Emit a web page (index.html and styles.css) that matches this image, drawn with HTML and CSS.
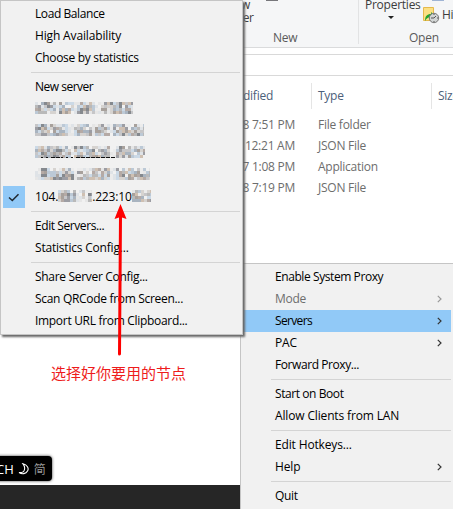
FILE: index.html
```
<!DOCTYPE html>
<html lang="en">
<head>
<meta charset="utf-8">
<title>Servers menu</title>
<link rel="stylesheet" href="styles.css">
</head>
<body>
<main class="desktop">
  <section class="explorer">
    <div class="ribbon">
      <div class="group group-new">
        <span class="cut">New<br>folder</span>
        <i class="stub stub-new"></i>
        <span class="caption">New</span>
      </div>
      <div class="group group-open">
        <div class="props">Properties<b class="caret"></b></div>
        <i class="stub stub-open"></i>
        <div class="history">
          <svg width="17" height="17" viewBox="0 0 17 17"><path d="M.5.5h10v13H.5z" fill="#fbe083" stroke="#e5b94c"/><path d="M2 14c0-5 2-7 6-7V5l4 4-4 3v-2c-3 0-4 1-6 4z" fill="#25a52d"/><circle cx="11" cy="11" r="4.700" fill="#d2d5d5" stroke="#777"/><path d="M11 11l2-2M11 11H8M11 7v1M11 14v1M14 11h1" stroke="#555" fill="none"/></svg>
          <span>History</span>
        </div>
        <span class="caption">Open</span>
      </div>
    </div>
    <div class="address"></div>
    <div class="table">
      <div class="row head"><span>Date modified</span><span>Type</span><span>Size</span></div>
      <div class="row"><span>8 7:51 PM</span><span>File folder</span></div>
      <div class="row"><span>8 12:21 AM</span><span>JSON File</span></div>
      <div class="row"><span>7 1:08 PM</span><span>Application</span></div>
      <div class="row"><span>8 7:19 PM</span><span>JSON File</span></div>
    </div>
  </section>
  <div class="taskbar"></div>
  <div class="ime"><span>CH</span><svg width="12" height="12" viewBox="0 0 12 12"><path d="M5 .8C9 2 11.300 5 9.500 8 8 11 4 11.500 1 9.500 4 10 6 9 6.500 6.500 7 4 6 2 5 .8z" fill="none" stroke="#fff" stroke-width="1.100"/></svg><span class="mode">简</span></div>

  <nav class="menu tray">
    <div class="item t4">Enable System Proxy</div>
    <div class="item off t3">Mode<svg class="chev" viewBox="0 0 5 8"><path d="M.8.8 4 4 .8 7.200"/></svg></div>
    <div class="item active t6">Servers<svg class="chev" viewBox="0 0 5 8"><path d="M.8.8 4 4 .8 7.200"/></svg></div>
    <div class="item">PAC<svg class="chev" viewBox="0 0 5 8"><path d="M.8.8 4 4 .8 7.200"/></svg></div>
    <div class="item t4">Forward Proxy...</div>
    <hr>
    <div class="item t4">Start on Boot</div>
    <div class="item">Allow Clients from LAN</div>
    <hr>
    <div class="item">Edit Hotkeys...</div>
    <div class="item">Help<svg class="chev" viewBox="0 0 5 8"><path d="M.8.8 4 4 .8 7.200"/></svg></div>
    <hr>
    <div class="item t3">Quit</div>
  </nav>

  <nav class="menu servers">
    <div class="item t4">Load Balance</div>
    <div class="item">High Availability</div>
    <div class="item t3">Choose by statistics</div>
    <hr>
    <div class="item t5">New server</div>
    <div class="item"><svg class="mosaic" data-width="98" data-gaps="19,38,60"></svg></div>
    <div class="item"><svg class="mosaic" data-width="109" data-gaps="33,55,73"></svg></div>
    <div class="item"><svg class="mosaic" data-width="110" data-gaps="35,75" data-feet="1"></svg></div>
    <div class="item"><svg class="mosaic" data-width="115" data-gaps="0,37,75"></svg></div>
    <div class="item checked"><span class="check"><svg width="12" height="9" viewBox="0 0 12 9"><path d="M1 4.500 4.300 7.500 10.500 1.200" fill="none" stroke="#202830" stroke-width="1.500"/></svg></span>104.<svg class="mosaic gap" data-width="34" data-gaps="18,26"></svg>.223:10<svg class="mosaic" data-width="19" data-gaps=""></svg></div>
    <hr>
    <div class="item t4">Edit Servers...</div>
    <div class="item t2">Statistics Config...</div>
    <hr>
    <div class="item t3">Share Server Config...</div>
    <div class="item t3">Scan QRCode from Screen...</div>
    <div class="item t3">Import URL from Clipboard...</div>
  </nav>

  <svg class="arrow" width="14" height="152" viewBox="0 0 14 152"><path d="M7.500 13 6.500 150" stroke="#fe0000" stroke-width="3" stroke-linecap="round"/><path d="M7.500 0 13.500 15 7.500 13 1.500 15z" fill="#fe0000"/></svg>
  <p class="note">选择好你要用的节点</p>
</main>
<script src="mosaic.js"></script>
</body>
</html>
```
FILE: styles.css
```
* { box-sizing: border-box; }
body { margin: 0; }
.desktop { position: relative; width: 453px; height: 509px; overflow: hidden; background: #fff; font: 12px/22px "Open Sans", "Noto Sans", sans-serif; color: #000; }
.explorer { margin-left: 240px; width: 213px; letter-spacing: -.25px; }
.ribbon { display: flex; height: 48px; background: #f5f6f7; border-bottom: 1px solid #dadbdc; color: #3c3c3c; }
.group { position: relative; height: 44px; }
.group-new { width: 119px; padding-left: 1px; border-right: 1px solid #e2e3e4; }
.group-open { width: 94px; }
.cut { position: absolute; left: -18px; top: -2px; text-align: center; line-height: 13px; }
.caption { position: absolute; top: 27px; left: 33px; color: #5a5a5a; }
.group-open .caption { left: 50px; }
.stub { position: absolute; top: 0; height: 1px; width: 12px; background: #77777b; left: 26px; }
.stub-open { left: 73px; background: #9fb4d4; }
.props { position: absolute; left: 6px; top: -6px; }
.caret { position: absolute; left: 23px; top: 22px; border: 3px solid transparent; border-top-color: #222; border-bottom: 0; }
.history { position: absolute; left: 64px; top: 7px; display: flex; white-space: nowrap; line-height: 16px; gap: 2px; }
.address { height: 22px; margin-top: 6px; border-top: 1px solid #d9d9d9; border-bottom: 1px solid #d9d9d9; }
.table { padding-top: 7px; color: #6d6d6d; }
.row { display: grid; grid-template-columns: 55px 23px 120px 15px; height: 21px; line-height: 21px; white-space: nowrap; }
.row span:first-child { justify-self: end; }
.row span:nth-child(2) { grid-column: 3; }
.row.head { height: 25px; line-height: 26px; margin-bottom: 6px; color: #4c607a; grid-template-columns: 33px 38px 120px 22px; }
.row.head span:nth-child(2), .row.head span:nth-child(3) { border-left: 1px solid #e5e5e5; padding-left: 6px; }
.row.head span:nth-child(3) { grid-column: 4; }
.taskbar { position: absolute; left: 0; right: 0; top: 485px; height: 24px; background: #262626; }
.ime { position: absolute; left: -8px; top: 456px; width: 60px; height: 25px; display: flex; align-items: center; gap: 4px; padding-left: 4px; border-radius: 4px; background: #000; color: #fff; box-shadow: 0 0 3px #333; font-size: 13px; }
.ime .mode { font-family: "Noto Sans CJK SC", sans-serif; color: #999; font-size: 12px; }
.menu { position: absolute; background: #f1f1f1; border: 1px solid #c5c5c5; padding: 2px; letter-spacing: -.15px; white-space: nowrap; }
.tray { left: 240px; top: 263px; width: 214px; height: 250px; }
.servers { left: 0; top: 0; width: 243px; height: 335px; box-shadow: 2px 2px 2px #666; }
.item { position: relative; display: flex; align-items: center; height: 22px; padding-left: 32px; }
.t2 { letter-spacing: -.2px; }
.t3 { letter-spacing: -.31px; }
.t4 { letter-spacing: -.42px; }
.t5 { letter-spacing: -.5px; }
.t6 { letter-spacing: -.65px; }
.menu hr { height: 1px; margin: 3px 0 3px 28px; border: 0; background: #d4d4d4; }
.active { background: #91c9f7; }
.off { color: #6d6d6d; }
.chev { position: absolute; right: 9px; width: 5px; height: 8px; fill: none; stroke: #333; stroke-width: 1.200; }
.off .chev { stroke: #999; }
.check { position: absolute; left: 0; top: 0; display: grid; place-items: center; width: 22px; height: 22px; background: #91c9f7; }
.mosaic { flex: none; height: 12px; display: block; margin-top: -2px; }
.arrow { position: absolute; left: 113px; top: 204px; }
.note { position: absolute; left: 51px; top: 361px; margin: 0; font: 15px/24px "Noto Sans CJK SC", sans-serif; color: #ee1c1c; white-space: nowrap; }
```
FILE: mosaic.js
```
// Fills each masked address with a grid of muted blocks, lighter at the word gaps.
const palette = ["#b9b9b9", "#9c9da3", "#d6d3d0", "#a9b4c0", "#cfc0b2", "#85898e", "#c6c6c8", "#bcc9d6", "#a8a19c", "#cbd9e6", "#b5aaa5"];
const pale = ["#f1f1f1", "#e6e6e6", "#ececec", "#dfe3e7"];
let seed = 7;
const next = () => (seed = (seed * 16807) % 2147483647) / 2147483647;
const pick = (list) => list[Math.floor(next() * list.length)];
const cell = 3;
document.querySelectorAll(".mosaic").forEach((svg) => {
  const width = Number(svg.dataset.width);
  const gaps = svg.dataset.gaps ? svg.dataset.gaps.split(",").map(Number) : [];
  svg.setAttribute("width", width);
  let out = "";
  for (let y = 0; y < 12; y += cell)
    for (let x = 0; x < width; x += cell) {
      const light = gaps.some((g) => x >= g && x < g + 4) || (y === 0 && next() < 0.35) || next() < 0.08;
      out += `<rect x="${x}" y="${y}" width="${cell}" height="${cell}" fill="${pick(light ? pale : palette)}"/>`;
    }
  if (svg.dataset.feet)
    for (let x = 6; x < 78; x += 5)
      out += `<rect x="${x}" y="11" width="${next() < 0.5 ? 2 : 4}" height="1" fill="#111"/>`;
  svg.innerHTML = out;
});
```
